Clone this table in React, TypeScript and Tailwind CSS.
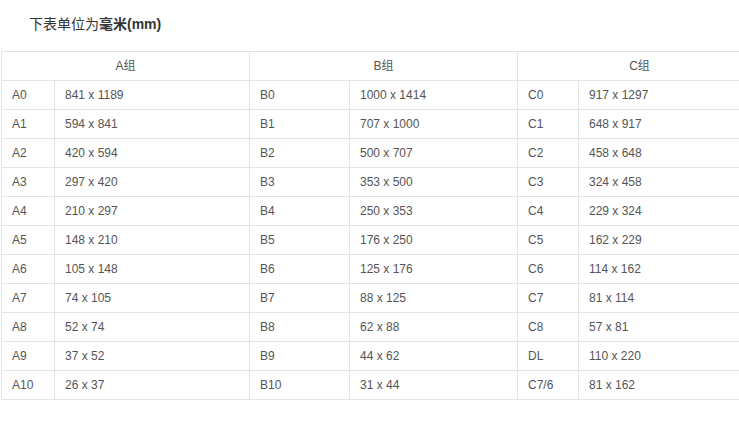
import React from "react";

const rows: string[][] = [
  ["A0", "841 x 1189", "B0", "1000 x 1414", "C0", "917 x 1297"],
  ["A1", "594 x 841", "B1", "707 x 1000", "C1", "648 x 917"],
  ["A2", "420 x 594", "B2", "500 x 707", "C2", "458 x 648"],
  ["A3", "297 x 420", "B3", "353 x 500", "C3", "324 x 458"],
  ["A4", "210 x 297", "B4", "250 x 353", "C4", "229 x 324"],
  ["A5", "148 x 210", "B5", "176 x 250", "C5", "162 x 229"],
  ["A6", "105 x 148", "B6", "125 x 176", "C6", "114 x 162"],
  ["A7", "74 x 105", "B7", "88 x 125", "C7", "81 x 114"],
  ["A8", "52 x 74", "B8", "62 x 88", "C8", "57 x 81"],
  ["A9", "37 x 52", "B9", "44 x 62", "DL", "110 x 220"],
  ["A10", "26 x 37", "B10", "31 x 44", "C7/6", "81 x 162"],
];

export default function App() {
  return (
    <div
      className="w-[739px] h-[430px] bg-white overflow-hidden"
      style={{ fontFamily: '"Liberation Sans", Arial, "Noto Sans CJK SC", sans-serif' }}
    >
      <div className="pl-[29px] pt-[15px] h-[51px] text-[14px] leading-[18px] text-[#333]">
        下表单位为<span className="font-bold">毫米(mm)</span>
      </div>
      <div className="ml-px w-[760px] grid grid-cols-[53px_195px_100px_168px_61px_183px] border-t border-l border-[#e4e4e4] text-[12px] text-[#555]">
        <div className="col-span-2 h-[29px] flex items-center justify-center border-r border-b border-[#e4e4e4]">A组</div>
        <div className="col-span-2 h-[29px] flex items-center justify-center border-r border-b border-[#e4e4e4]">B组</div>
        <div className="col-span-2 h-[29px] flex items-center justify-center border-r border-b border-[#e4e4e4]">C组</div>
        {rows.map((r, i) => (
          <React.Fragment key={i}>
            {r.map((c, j) => (
              <div
                key={j}
                className={`h-[29px] flex items-center border-r border-b border-[#e4e4e4] ${j % 2 === 0 ? "pl-[10px]" : "pl-[10px]"}`}
              >
                {c}
              </div>
            ))}
          </React.Fragment>
        ))}
      </div>
    </div>
  );
}
